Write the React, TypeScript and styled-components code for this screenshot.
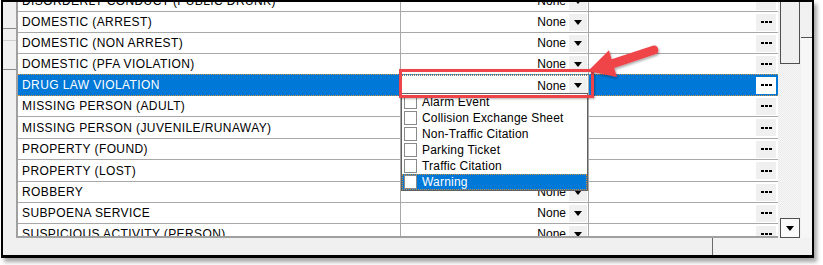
import React from "react";
import styled, { createGlobalStyle } from "styled-components";

const Global = createGlobalStyle`
  html, body { margin: 0; padding: 0; background: #ffffff; }
  body { width: 823px; height: 265px; overflow: hidden; font-family: "Liberation Sans", Arial, sans-serif; }
`;

const Page = styled.div`
  position: relative;
  width: 823px;
  height: 265px;
  background: #fff;
`;

const Frame = styled.div`
  position: absolute;
  left: 1px;
  top: 0;
  width: 809px;
  height: 253px;
  border-top: 2px solid #000;
  border-left: 2px solid #000;
  border-right: 2px solid #000;
  border-bottom: 3px solid #000;
  box-shadow: 3px 4px 4px rgba(0, 0, 0, 0.35);
  background: #f0f0f0;
  display: flex;
  flex-direction: column;
  overflow: hidden;
`;

const Main = styled.div`
  display: flex;
  height: 236px;
`;

const LeftPanel = styled.div`
  width: 13px;
  flex: none;
  background: #f0f0f0;
  display: flex;
  flex-direction: column;
`;

const LeftBlock = styled.div<{ $h: number; $line?: string }>`
  height: ${(p) => p.$h}px;
  flex: none;
  border-bottom: 1px solid ${(p) => p.$line || "#a0a0a0"};
`;

const GridBox = styled.div`
  width: 760px;
  flex: none;
  border-left: 2px solid #a0a0a0;
  border-bottom: 2px solid #a0a0a0;
  background: #fff;
  overflow: hidden;
  position: relative;
`;

const Rows = styled.div`
  margin-top: -11px;
  display: flex;
  flex-direction: column;
`;

const Row = styled.div<{ $sel?: boolean; $h: number }>`
  height: ${(p) => p.$h}px;
  display: flex;
  box-sizing: border-box;
  border-bottom: 1px solid #a8a8a8;
  background: ${(p) => (p.$sel ? "#0078d7" : "#fff")};
  ${(p) =>
    p.$sel
      ? `border-top: 1px dotted #c89040; border-bottom: 1px dotted #c89040; margin-top: -1px; height: ${p.$h + 1}px;`
      : ""}
`;

const LabelCell = styled.div<{ $sel?: boolean }>`
  width: 383px;
  flex: none;
  border-right: 1px solid #a8a8a8;
  padding-left: 4px;
  box-sizing: border-box;
  display: flex;
  align-items: center;
  font-size: 12px;
  letter-spacing: 0.4px;
  color: ${(p) => (p.$sel ? "#fff" : "#000")};
  white-space: nowrap;
  overflow: hidden;
`;

const ValueCell = styled.div<{ $edit?: boolean }>`
  width: 188px;
  flex: none;
  border-right: 1px solid #a8a8a8;
  box-sizing: border-box;
  display: flex;
  align-items: center;
  justify-content: flex-end;
  padding-right: 1px;
  background: ${(p) => (p.$edit ? "#fff" : "transparent")};
  ${(p) => (p.$edit ? "border-top: 1px dotted #808080;" : "")}
`;

const ValueText = styled.span`
  font-size: 12px;
  color: #000;
  margin-right: 3px;
`;

const DropBtn = styled.div`
  width: 18px;
  height: 17px;
  background: #f0f0f0;
  display: flex;
  align-items: center;
  justify-content: center;
`;

const Tri = styled.div`
  width: 0;
  height: 0;
  border-left: 4px solid transparent;
  border-right: 4px solid transparent;
  border-top: 5px solid #000;
`;

const ExtraCell = styled.div`
  flex: 1;
  display: flex;
  align-items: center;
  justify-content: flex-end;
  padding-right: 2px;
`;

const DotsBtn = styled.div<{ $sel?: boolean }>`
  width: 20px;
  height: 17px;
  background: ${(p) => (p.$sel ? "#fff" : "#f0f0f0")};
  display: flex;
  align-items: center;
  justify-content: center;
  gap: 1px;
`;

const Dot = styled.span`
  width: 3px;
  height: 2px;
  background: #000;
`;

const Scrollbar = styled.div`
  width: 22px;
  flex: none;
  margin-left: 1px;
  height: 236px;
  display: flex;
  flex-direction: column;
  justify-content: space-between;
  background-color: #f4f4f4;
  background-image: repeating-conic-gradient(#ebebeb 0 25%, #f7f7f7 0 50%);
  background-size: 2px 2px;
`;

const Thumb = styled.div`
  height: 61px;
  margin: 0 1px;
  border: 1px solid #505050;
  border-top: none;
  background: #f0f0f0;
`;

const ArrowBtn = styled.div`
  height: 18px;
  margin: 0 1px;
  border: 1px solid #505050;
  background: #fafafa;
  display: flex;
  align-items: center;
  justify-content: center;
`;

const RightPanel = styled.div`
  flex: 1;
  display: flex;
  flex-direction: column;
  background: #f0f0f0;
`;

const RightTop = styled.div`
  height: 35px;
  border-bottom: 1px solid #505050;
  background: #f0f0f0;
`;

const RightRest = styled.div`
  flex: 1;
  background: #f6f6f6;
`;

const Bottom = styled.div`
  flex: 1;
  display: flex;
  background: #f0f0f0;
`;

const BottomLeft = styled.div`
  width: 709px;
  flex: none;
  border-right: 1px solid #6a6a6a;
`;

const BottomRight = styled.div`
  flex: 1;
  background: #f2f2f2;
`;

const DropList = styled.div`
  position: absolute;
  left: 401px;
  top: 93px;
  width: 187px;
  box-sizing: border-box;
  border: 1px solid #606060;
  background: #fff;
  display: flex;
  flex-direction: column;
`;

const Item = styled.div<{ $sel?: boolean }>`
  height: 16px;
  display: flex;
  align-items: center;
  gap: 5px;
  padding-left: 2px;
  box-sizing: border-box;
  font-size: 12px;
  letter-spacing: 0.2px;
  background: ${(p) => (p.$sel ? "#0078d7" : "#fff")};
  color: ${(p) => (p.$sel ? "#fff" : "#000")};
  ${(p) => (p.$sel ? "outline: 1px dotted #c89040; outline-offset: -1px;" : "")}
`;

const Check = styled.span`
  width: 11px;
  height: 12px;
  flex: none;
  border: 1px solid #8a8a8a;
  background: #fff;
`;

const RedBox = styled.div`
  position: absolute;
  left: 399px;
  top: 69px;
  width: 195px;
  height: 29px;
  box-sizing: border-box;
  border: 3px solid #ee4449;
  box-shadow: 1px 1px 2px rgba(0, 0, 0, 0.3);
`;

const ArrowSvg = styled.svg`
  position: absolute;
  left: 0;
  top: 0;
  overflow: visible;
`;

const labels = [
  "DISORDERLY CONDUCT (PUBLIC DRUNK)",
  "DOMESTIC (ARREST)",
  "DOMESTIC (NON ARREST)",
  "DOMESTIC (PFA VIOLATION)",
  "DRUG LAW VIOLATION",
  "MISSING PERSON (ADULT)",
  "MISSING PERSON (JUVENILE/RUNAWAY)",
  "PROPERTY (FOUND)",
  "PROPERTY (LOST)",
  "ROBBERY",
  "SUBPOENA SERVICE",
  "SUSPICIOUS ACTIVITY (PERSON)",
];

/* the source grid's row pitch is slightly over 21px */
const rowHeights = [21, 21, 21, 21, 21, 21, 22, 21, 22, 21, 21, 21];

const options = [
  "Alarm Event",
  "Collision Exchange Sheet",
  "Non-Traffic Citation",
  "Parking Ticket",
  "Traffic Citation",
  "Warning",
];

export default function App() {
  return (
    <Page>
      <Global />
      <Frame>
        <Main>
          <LeftPanel>
            <LeftBlock $h={26} $line="#8a8a8a" />
            <LeftBlock $h={11} $line="#d0d0d0" />
            <LeftBlock $h={28} $line="#8a8a8a" />
          </LeftPanel>
          <GridBox>
            <Rows>
              {labels.map((l, i) => {
                const sel = i === 4;
                return (
                  <Row key={l} $sel={sel} $h={rowHeights[i]}>
                    <LabelCell $sel={sel}>{l}</LabelCell>
                    <ValueCell $edit={sel}>
                      <ValueText>None</ValueText>
                      <DropBtn>
                        <Tri />
                      </DropBtn>
                    </ValueCell>
                    <ExtraCell>
                      <DotsBtn $sel={sel}>
                        <Dot />
                        <Dot />
                        <Dot />
                      </DotsBtn>
                    </ExtraCell>
                  </Row>
                );
              })}
            </Rows>
          </GridBox>
          <Scrollbar>
            <Thumb />
            <ArrowBtn>
              <Tri />
            </ArrowBtn>
          </Scrollbar>
          <RightPanel>
            <RightTop />
            <RightRest />
          </RightPanel>
        </Main>
        <Bottom>
          <BottomLeft />
          <BottomRight />
        </Bottom>
      </Frame>
      <DropList>
        {options.map((o, i) => (
          <Item key={o} $sel={i === options.length - 1}>
            <Check />
            {o}
          </Item>
        ))}
      </DropList>
      <RedBox />
      <ArrowSvg width="823" height="265" viewBox="0 0 823 265">
        <defs>
          <filter id="sh" x="-20%" y="-20%" width="140%" height="140%">
            <feDropShadow dx="1" dy="1.5" stdDeviation="1.2" floodColor="#000" floodOpacity="0.35" />
          </filter>
        </defs>
        <path
          filter="url(#sh)"
          fill="#ef4549"
          d="M588 71 L609 50.2 L611.6 59.3 L652.7 45.7 A4.5 4.5 0 0 1 655.3 54.3 L614.2 67.9 L616.9 77 Z"
        />
      </ArrowSvg>
    </Page>
  );
}
